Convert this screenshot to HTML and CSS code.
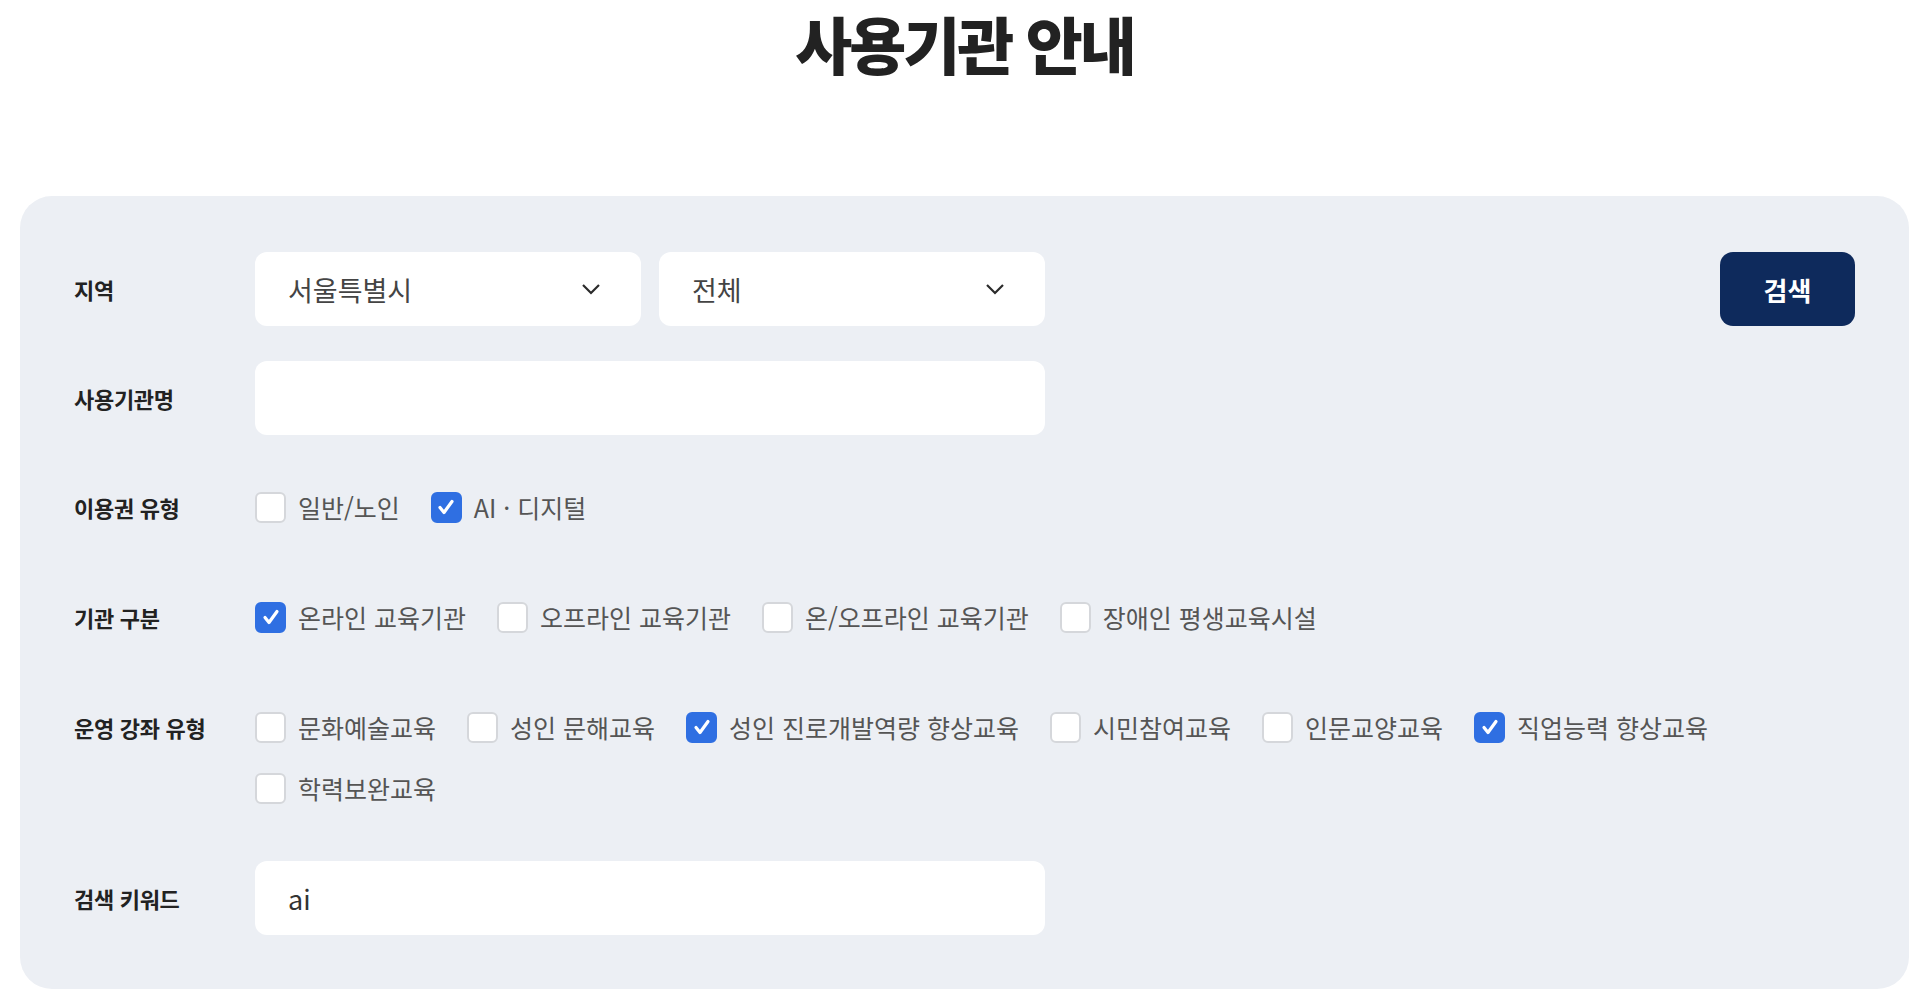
FILE: index.html
```html
<!DOCTYPE html>
<html lang="ko">
<head>
    <meta charset="UTF-8">
    <meta name="viewport" content="width=device-width, initial-scale=1.0">
    <title>사용기관 안내</title>
    <link rel="stylesheet" href="styles.css">
</head>
<body>
    <div class="wrap">
        <h1 class="page-title">사용기관 안내</h1>

        <form class="search-box" onsubmit="return false">
            <div class="search-row">
                <span class="row-label">지역</span>
                <div class="field-group">
                    <div class="select">
                        <span>서울특별시</span>
                        <svg width="20" height="12" viewBox="0 0 20 12"><path d="M2 2l8 8 8-8" fill="none" stroke="#2b2b2b" stroke-width="2.2"/></svg>
                    </div>
                    <div class="select">
                        <span>전체</span>
                        <svg width="20" height="12" viewBox="0 0 20 12"><path d="M2 2l8 8 8-8" fill="none" stroke="#2b2b2b" stroke-width="2.2"/></svg>
                    </div>
                </div>
                <button class="btn-search" type="submit">검색</button>
            </div>

            <div class="search-row">
                <span class="row-label">사용기관명</span>
                <input class="text-input" type="text" value="">
            </div>

            <div class="search-row check-row">
                <span class="row-label">이용권 유형</span>
                <div class="check-list">
                    <label class="check"><span class="check-box"></span>일반/노인</label>
                    <label class="check"><span class="check-box on"><svg width="18" height="16" viewBox="0 0 18 16"><path d="M3 8.5l4 5L15 2.5" fill="none" stroke="#fff" stroke-width="3.2" stroke-linecap="round" stroke-linejoin="round"/></svg></span>AI · 디지털</label>
                </div>
            </div>

            <div class="search-row check-row">
                <span class="row-label">기관 구분</span>
                <div class="check-list">
                    <label class="check"><span class="check-box on"><svg width="18" height="16" viewBox="0 0 18 16"><path d="M3 8.5l4 5L15 2.5" fill="none" stroke="#fff" stroke-width="3.2" stroke-linecap="round" stroke-linejoin="round"/></svg></span>온라인 교육기관</label>
                    <label class="check"><span class="check-box"></span>오프라인 교육기관</label>
                    <label class="check"><span class="check-box"></span>온/오프라인 교육기관</label>
                    <label class="check"><span class="check-box"></span>장애인 평생교육시설</label>
                </div>
            </div>

            <div class="search-row check-row">
                <span class="row-label">운영 강좌 유형</span>
                <div class="check-list">
                    <label class="check"><span class="check-box"></span>문화예술교육</label>
                    <label class="check"><span class="check-box"></span>성인 문해교육</label>
                    <label class="check"><span class="check-box on"><svg width="18" height="16" viewBox="0 0 18 16"><path d="M3 8.5l4 5L15 2.5" fill="none" stroke="#fff" stroke-width="3.2" stroke-linecap="round" stroke-linejoin="round"/></svg></span>성인 진로개발역량 향상교육</label>
                    <label class="check"><span class="check-box"></span>시민참여교육</label>
                    <label class="check"><span class="check-box"></span>인문교양교육</label>
                    <label class="check"><span class="check-box on"><svg width="18" height="16" viewBox="0 0 18 16"><path d="M3 8.5l4 5L15 2.5" fill="none" stroke="#fff" stroke-width="3.2" stroke-linecap="round" stroke-linejoin="round"/></svg></span>직업능력 향상교육</label>
                    <label class="check"><span class="check-box"></span>학력보완교육</label>
                </div>
            </div>

            <div class="search-row">
                <span class="row-label">검색 키워드</span>
                <input class="text-input" type="text" value="ai">
            </div>
        </form>
    </div>
</body>
</html>
```

FILE: styles.css
```css
*{
    margin: 0;
    padding: 0;
    box-sizing: border-box;
}
body{
    font-family: "Noto Sans CJK KR", "Noto Sans", sans-serif;
    background-color: #fff;
    color: #222;
}
.wrap{
    padding: 8px 16px 0 20px;
}
.page-title{
    text-align: center;
    font-size: 62px;
    line-height: 70px;
    font-weight: 900;
    letter-spacing: -3px;
    color: #222;
}
.search-box{
    margin-top: 118px;
    background-color: #eceff4;
    border-radius: 32px;
    padding: 56px 54px 54px;
    display: flex;
    flex-direction: column;
    gap: 35px;
}
.search-row{
    display: flex;
    align-items: center;
    min-height: 74px;
}
.check-row{
    align-items: flex-start;
    padding: 22px 0 23px;
}
.row-label{
    width: 181px;
    flex-shrink: 0;
    font-size: 22px;
    font-weight: 700;
    line-height: 30px;
    letter-spacing: -0.3px;
    color: #222;
}
.field-group{
    display: flex;
    gap: 18px;
}
.select{
    width: 386px;
    height: 74px;
    background-color: #fff;
    border-radius: 12px;
    padding: 0 40px 0 33px;
    display: flex;
    align-items: center;
    justify-content: space-between;
    font-size: 27px;
    color: #444;
}
.text-input{
    width: 790px;
    height: 74px;
    border: none;
    outline: none;
    border-radius: 12px;
    background-color: #fff;
    padding: 0 33px;
    font-family: inherit;
    font-size: 27px;
    color: #333;
}
.btn-search{
    margin-left: auto;
    width: 135px;
    height: 74px;
    border: none;
    border-radius: 13px;
    background-color: #0e2a5c;
    color: #fff;
    font-family: inherit;
    font-size: 26px;
    font-weight: 700;
    cursor: pointer;
}
.check-list{
    flex: 1;
    display: flex;
    flex-wrap: wrap;
    column-gap: 31px;
    row-gap: 31px;
}
.check{
    display: flex;
    align-items: center;
    gap: 12px;
    height: 30px;
    font-size: 25px;
    color: #555;
    cursor: pointer;
}
.check-box{
    width: 31px;
    height: 31px;
    border: 2px solid #d5d7db;
    border-radius: 6px;
    background-color: #fff;
    display: flex;
    align-items: center;
    justify-content: center;
}
.check-box.on{
    background-color: #2f6fe2;
    border-color: #2f6fe2;
}
```
